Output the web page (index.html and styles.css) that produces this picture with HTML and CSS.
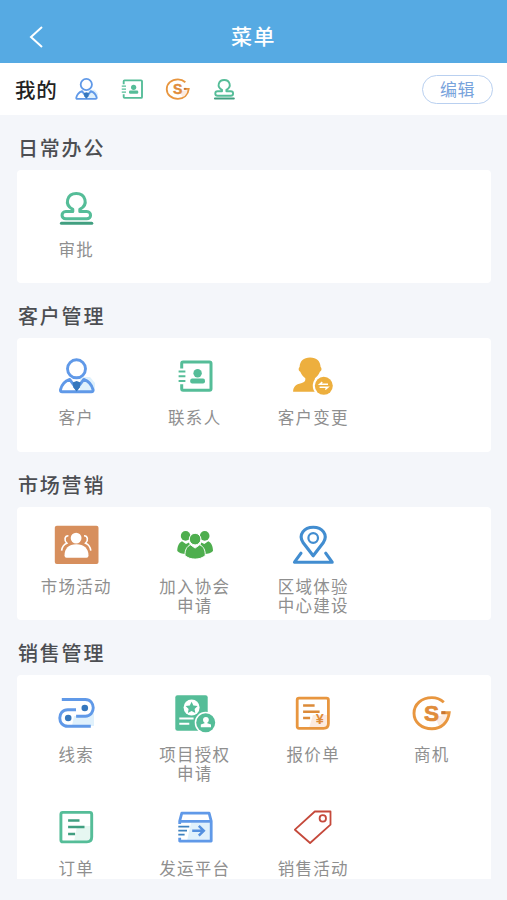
FILE: index.html
```html
<!DOCTYPE html>
<html lang="zh-CN">
<head>
<meta charset="utf-8">
<title>菜单</title>
<link rel="stylesheet" href="styles.css">
</head>
<body>
<svg class="sprite" aria-hidden="true">
  <symbol id="stamp" viewBox="0 0 48 48">
    <g fill="none" stroke="#55bd98" stroke-width="3" stroke-linejoin="round" stroke-linecap="round">
      <path d="M20.800 27.600v-2.200c-9.400-5-5.400-15.800 3.500-15.800s12.900 10.800 3.500 15.800v2.200h7c5 0 5 7.200 0 7.200h-21c-5 0-5-7.200 0-7.200z"/>
      <path d="M9.400 39.200h30.400" stroke="#419f80"/>
    </g>
  </symbol>
  <symbol id="person" viewBox="0 0 48 48">
    <path d="M28 25h10l5 6v8H28z" fill="#dff1fc"/>
    <g fill="none" stroke="#6099e8" stroke-width="2.900" stroke-linejoin="round">
      <circle cx="24.500" cy="16.800" r="9"/>
      <path d="M17.700 27.400c-5 1.700-8 5.200-9.200 10.300-.3 1.500.3 2 1.600 2h29.200c1.500 0 2-.6 1.700-2-1.300-5.100-4.200-8.600-9.200-10.300L24.600 37z"/>
    </g>
    <path d="M20.600 30.500l4-1.500 4 1.500-.8 5-3.200 4-3.200-4z" fill="#3577bd"/>
  </symbol>
  <symbol id="contact" viewBox="0 0 48 48">
    <g fill="none" stroke="#55bd98" stroke-width="3">
      <path d="M10.700 16.500v-5q0-1.400 1.400-1.400h26.400q1.500 0 1.500 1.400v25.200q0 1.500-1.500 1.500H12.100q-1.400 0-1.400-1.400v-4.500" stroke-linejoin="round"/>
      <path d="M7.600 19.500h6.800M7.600 24.200h6.800M7.600 28.900h6.800" stroke-width="2"/>
    </g>
    <circle cx="26.600" cy="21.200" r="4.200" fill="#55bd98"/>
    <rect x="19.200" y="26.400" width="14.800" height="5" rx="2" fill="#55bd98"/>
  </symbol>
  <symbol id="change" viewBox="0 0 48 48">
    <path d="M4.100 39.800c0-5 2.800-7.600 8-8.600 3-.7 4.200-2 4.200-3.500v-1.500c-2.500-1.800-4-4-5-6.500-2-.6-2-3.600-.7-4.700C11 9 14.500 5.500 21.100 5.500S31.200 9 31.600 15c1.300 1.100 1.300 4.100-.7 4.700-1 2.500-2.500 4.700-5 6.500v8l2 5.600z" fill="#edaf3e"/>
    <circle cx="34.800" cy="33.800" r="11" fill="#fff"/>
    <circle cx="34.800" cy="33.800" r="9" fill="#edaf3e"/>
    <path d="M39 32.300h-8.300l2.600-2.200M30.600 35.300h8.300l-2.600 2.200" fill="none" stroke="#fff" stroke-width="1.400"/>
  </symbol>
  <symbol id="market" viewBox="0 0 48 48">
    <rect x="2.800" y="4.700" width="43.700" height="38.300" rx="2" fill="#d78f5d"/>
    <circle cx="24.100" cy="17.100" r="5.400" fill="#fff"/>
    <path d="M12.500 34.500c0-7 4-11.300 11.800-11.300S36.500 27.500 36.500 34.500q0 2.200-2 2.200h-20q-2 0-2-2.200z" fill="#fff"/>
    <path d="M16.400 14.700c-4 0-4.400 4.800-1.600 7.500-3 1.300-4.800 3.800-5.200 7.500M32 14.700c4 0 4.400 4.800 1.600 7.500 3 1.300 4.800 3.800 5.200 7.500" fill="none" stroke="#fff" stroke-width="1.600"/>
  </symbol>
  <symbol id="group" viewBox="0 0 48 48">
    <g fill="#4eae4e">
      <circle cx="14.600" cy="14.900" r="4.800"/><circle cx="33.700" cy="14.900" r="4.800"/>
      <path d="M11 20.300l4 2.700 3-1.500 1 3-4 8.500c-4 0-7-1.300-8.700-3 .1-4.500 1.500-8.300 4.700-9.700zM37.300 20.300l-4 2.700-3-1.500-1 3 4 8.500c4 0 7-1.300 8.700-3-.1-4.500-1.500-8.300-4.700-9.700z"/>
    </g>
    <g fill="#4eae4e" stroke="#fff" stroke-width="1">
      <circle cx="24.100" cy="18.100" r="5.800"/>
      <path d="M19.500 23.800l4.600 3.300 4.600-3.300c3.800 1.500 5.600 5.300 5.600 10.700-5 4.800-15.400 4.800-20.400 0 0-5.400 1.800-9.200 5.600-10.700z"/>
    </g>
  </symbol>
  <symbol id="place" viewBox="0 0 48 48">
    <g fill="none" stroke="#428dd0" stroke-width="3.100" stroke-linejoin="round" stroke-linecap="round">
      <path d="M24.200 34.800L14 21.500c-5-7.800 1.200-15.300 10.200-15.300s15.200 7.500 10.200 15.300z"/>
      <circle cx="24.200" cy="17" r="4.800" stroke-width="2.200"/>
      <path d="M12 32.200l-6.500 9h37.700l-6.500-9"/>
    </g>
  </symbol>
  <symbol id="clue" viewBox="0 0 48 48">
    <path d="M22 27h12l8-7v17H20z" fill="#e0f1fc"/>
    <path d="M9.800 10.500h23.500c10.600 0 10.600 16.700 0 16.700h-9.200M24 20.700h-8.200c-10.700 0-10.700 16.600 0 16.600h23" fill="none" stroke="#6099e8" stroke-width="2.900"/>
    <circle cx="32.800" cy="19" r="3.300" fill="#3577bd"/><circle cx="16.200" cy="29" r="3.300" fill="#3577bd"/>
  </symbol>
  <symbol id="project" viewBox="0 0 48 48">
    <rect x="4.300" y="6.300" width="32.400" height="35.400" rx="2.200" fill="#55bd98"/>
    <circle cx="20.600" cy="18.500" r="8" fill="#fff"/>
    <path d="M20.600 12.700l1.800 3.800 4.200.6-3 2.900.7 4.100-3.700-2-3.700 2 .7-4.100-3-2.900 4.200-.6z" fill="#55bd98"/>
    <path d="M8.300 29.500h14.300M8.300 34.700h10" stroke="#fff" stroke-width="2"/>
    <circle cx="34.700" cy="33.700" r="11" fill="#fff"/><circle cx="34.700" cy="33.700" r="9.500" fill="#55bd98"/>
    <circle cx="34.900" cy="30.800" r="2.900" fill="#fff"/>
    <path d="M33.500 32h2.800v2.300l3.700 1.200v2.700H29.800v-2.700l3.700-1.200z" fill="#fff"/>
  </symbol>
  <symbol id="quote" viewBox="0 0 48 48">
    <path d="M24 26h15v9l-4 4H20z" fill="#fcebe0"/>
    <path d="M10 9.100h27.500q1.900 0 1.900 1.900v23.500q0 4.800-4.800 4.800H10q-1.800 0-1.800-1.800V11q0-1.900 1.800-1.900z" fill="none" stroke="#e8963f" stroke-width="2.800"/>
    <path d="M14.100 16.500h11.500M14.100 22.700h16.500M14.100 29h7" stroke="#dc8a38" stroke-width="2.600"/>
    <text x="30.700" y="35.300" text-anchor="middle" font-size="14.500" class="mark orange">¥</text>
  </symbol>
  <symbol id="chance" viewBox="0 0 48 48">
    <path d="M27 28l13-3c-1 7-5 10-9 12z" fill="#fcebe0"/>
    <path d="M35.800 13.200C32.500 10.200 28.500 8.600 23.900 8.600 13.500 8.600 6 15.300 6 24.200s7.500 15.500 17.900 15.500c9.500 0 16.300-6.200 17.300-16h-7.800" fill="none" stroke="#e8963f" stroke-width="2.900"/>
    <path d="M33.400 23.700h4" stroke="#c87431" stroke-width="2.900"/>
    <text x="23.600" y="32.300" text-anchor="middle" font-size="22.500" class="mark orange heavy">S</text>
  </symbol>
  <symbol id="order" viewBox="0 0 48 48">
    <path d="M25 23h14v12l-4 4H22z" fill="#e6f7f1"/>
    <path d="M10.800 9.400h27q1.900 0 1.900 1.900v22.800q0 4.800-4.800 4.800H10.800Q8.900 38.900 8.900 37V11.300q0-1.900 1.900-1.900z" fill="none" stroke="#55bd98" stroke-width="2.900"/>
    <path d="M16.100 17.400h11.400M16.100 24.100h16.400M16.100 30.900h7" stroke="#419f80" stroke-width="2.500"/>
  </symbol>
  <symbol id="ship" viewBox="0 0 48 48">
    <path d="M20 20h20v18H16z" fill="#e0f1fc"/>
    <path d="M8.700 21v-3l2.100-7.800h27.300L40.200 18v20.100H8.700v-3.300M8.700 18.400h31.500" fill="none" stroke="#6099e8" stroke-width="2.800" stroke-linejoin="round"/>
    <path d="M7.300 23.700h11M7.300 27.700h8.700M7.300 31.700h6.300" stroke="#3f82bf" stroke-width="1.800"/>
    <path d="M21.200 27.700h11.500M27.800 22.800l5 4.900-5 4.900" fill="none" stroke="#5490df" stroke-width="2.500"/>
  </symbol>
  <symbol id="tag" viewBox="0 0 48 48">
    <g fill="none" stroke="#c5493b" stroke-width="1.800" stroke-linejoin="round">
      <path d="M25.800 8.500h15.700v13.200L21.100 40 5.900 26.700z"/><circle cx="33.800" cy="15.400" r="3.200"/>
    </g>
  </symbol>
</svg>

<header class="navbar">
  <svg class="back" viewBox="0 0 16 24"><path d="M14 2L3 12l11 10" fill="none" stroke="#fff" stroke-width="2"/></svg>
  <h1>菜单</h1>
</header>
<section class="mine">
  <span class="mine-title">我的</span>
  <div class="mine-icons">
    <svg><use href="#person"/></svg>
    <svg><use href="#contact"/></svg>
    <svg><use href="#chance"/></svg>
    <svg><use href="#stamp"/></svg>
  </div>
  <button class="edit">编辑</button>
</section>
<main>
  <section class="group">
    <h2>日常办公</h2>
    <div class="card">
      <a class="item"><svg><use href="#stamp"/></svg><span>审批</span></a>
    </div>
  </section>
  <section class="group">
    <h2>客户管理</h2>
    <div class="card">
      <a class="item"><svg><use href="#person"/></svg><span>客户</span></a>
      <a class="item"><svg><use href="#contact"/></svg><span>联系人</span></a>
      <a class="item"><svg><use href="#change"/></svg><span>客户变更</span></a>
    </div>
  </section>
  <section class="group">
    <h2>市场营销</h2>
    <div class="card">
      <a class="item"><svg><use href="#market"/></svg><span>市场活动</span></a>
      <a class="item"><svg><use href="#group"/></svg><span>加入协会<br>申请</span></a>
      <a class="item"><svg><use href="#place"/></svg><span>区域体验<br>中心建设</span></a>
    </div>
  </section>
  <section class="group">
    <h2>销售管理</h2>
    <div class="card card-last">
      <a class="item"><svg><use href="#clue"/></svg><span>线索</span></a>
      <a class="item"><svg><use href="#project"/></svg><span>项目授权<br>申请</span></a>
      <a class="item"><svg><use href="#quote"/></svg><span>报价单</span></a>
      <a class="item"><svg><use href="#chance"/></svg><span>商机</span></a>
      <a class="item"><svg><use href="#order"/></svg><span>订单</span></a>
      <a class="item"><svg><use href="#ship"/></svg><span>发运平台</span></a>
      <a class="item"><svg><use href="#tag"/></svg><span>销售活动</span></a>
    </div>
  </section>
</main>
</body>
</html>
```
FILE: styles.css
```css
* { box-sizing: border-box; margin: 0; padding: 0; }

body {
  height: 900px;
  overflow: hidden;
  background: #f4f6fa;
  font-family: "Noto Sans CJK SC", sans-serif;
}

.sprite { display: none; }
.mark { font-family: "Liberation Sans", sans-serif; font-weight: 700; }
.orange { fill: #e08c3a; }
.heavy { stroke: #e08c3a; stroke-width: 0.7px; }

.navbar {
  display: grid;
  grid-template-columns: 60px 1fr 60px;
  align-items: center;
  height: 63px;
  padding-top: 10px;
  background: #56aae3;
  color: #fff;
}
.back { width: 16px; height: 24px; margin-left: 28px; }
.navbar h1 {
  padding-bottom: 3px;
  font-size: 21px;
  font-weight: 500;
  line-height: 30px;
  letter-spacing: 1.4px;
  text-align: center;
}

.mine {
  display: flex;
  align-items: center;
  height: 52px;
  padding: 0 14px 0 15px;
  background: #fff;
}
.mine-title {
  width: 56px;
  color: #222;
  font-size: 20.5px;
  font-weight: 500;
  letter-spacing: 0.8px;
}
.mine-icons { display: flex; flex: 1; gap: 16px; }
.mine-icons svg { width: 30px; height: 30px; }
.edit {
  width: 71px;
  height: 29px;
  border: 1.5px solid #b9d0f0;
  border-radius: 15px;
  background: #fff;
  color: #78a3dc;
  font: 400 17px/24px "Noto Sans CJK SC", sans-serif;
  letter-spacing: 0.6px;
}

main { padding: 0 16px 0 17px; }
.group h2 {
  height: 55px;
  padding: 18px 0 0 1px;
  color: #4c4e52;
  font-size: 20px;
  font-weight: 500;
  line-height: 30px;
  letter-spacing: 1.8px;
}
.card {
  display: grid;
  grid-template-columns: repeat(4, 1fr);
  grid-auto-rows: 113.4px;
  border-radius: 4px;
  background: #fff;
}
.card-last { height: 204px; border-radius: 4px 4px 0 0; }
.item {
  display: flex;
  flex-direction: column;
  align-items: center;
  padding-top: 14px;
}
.item svg { width: 48px; height: 48px; }
.item span {
  margin-top: 8px;
  color: #8f8f8f;
  font-size: 16.5px;
  line-height: 19px;
  letter-spacing: 1.3px;
  text-align: center;
  white-space: nowrap;
}
```
